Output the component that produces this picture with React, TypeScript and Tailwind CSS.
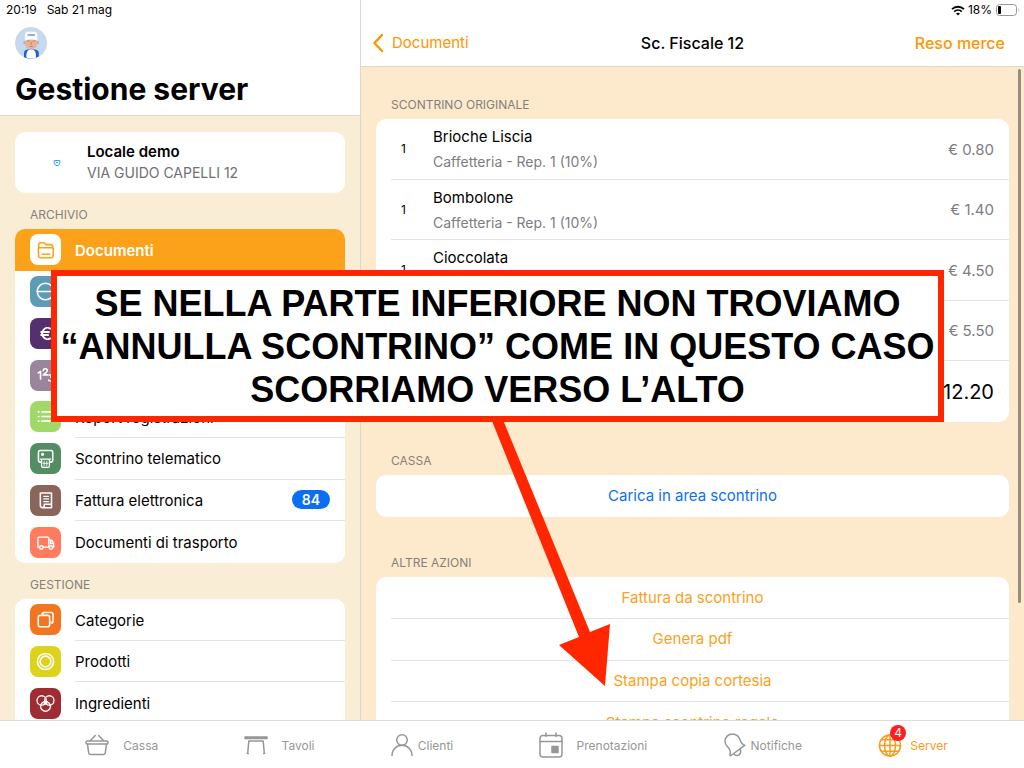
import React from 'react'

type ArchiveItem = {
  label: string
  color: string
  icon: React.ReactNode
  badge?: number
  active?: boolean
}

const stroke = {
  fill: 'none',
  stroke: 'currentColor',
  strokeWidth: 1.5,
  strokeLinecap: 'round' as const,
  strokeLinejoin: 'round' as const,
}

const FolderIcon = () => (
  <svg viewBox="0 0 30 30" className="w-full h-full" {...stroke}>
    <path d="M8.5 14v-4c0-.9.6-1.500 1.500-1.500h3.200c.5 0 .9.2 1.200.6l1 1.200h4.900c.9 0 1.500.6 1.500 1.500v2" />
    <path d="M9 13.300h12.500c.7 0 1.200.5 1.100 1.200l-.2 6.800c0 .9-.7 1.600-1.600 1.600H9.900c-.9 0-1.600-.7-1.600-1.600L8 14.500c0-.7.4-1.200 1-1.200z" />
    <path d="M11.800 19.500h7.200" />
  </svg>
)

const MinusIcon = () => (
  <svg viewBox="0 0 30 30" className="w-full h-full" {...stroke}>
    <circle cx="15" cy="15" r="8" />
    <path d="M7 15h16" />
  </svg>
)

const EuroIcon = () => (
  <svg viewBox="0 0 30 30" className="w-full h-full" {...stroke} strokeWidth={1.8}>
    <path d="M19.500 10.300a5 5.500 0 1 0 0 9.400M10.800 13.600h7.500M10.800 16.400h6.800" />
  </svg>
)

const NumbersIcon = () => (
  <svg viewBox="0 0 30 30" className="w-full h-full" {...stroke} strokeWidth={1.6}>
    <path d="M8 12.500l2.200-1.500v7.500M12.800 10.300c.2-2.600 4.200-2.400 3.900.1-.1 1.400-2 2.600-3.800 4h4.200M18.500 14.500h3.300l-1.800 2.100c2.800.2 2.400 3.900-.3 3.700-.8 0-1.400-.3-1.700-.8" />
  </svg>
)

const ListIcon = () => (
  <svg viewBox="0 0 30 30" className="w-full h-full" {...stroke} strokeWidth={1.6}>
    <path d="M11.500 10.500h11M11.500 15h11M11.500 19.500h11M8 10.500h.6M8 15h.6M8 19.500h.6" />
  </svg>
)

const PrinterIcon = () => (
  <svg viewBox="0 0 30 30" className="w-full h-full" {...stroke}>
    <path d="M11 18.500H9.800c-.9 0-1.600-.6-1.600-1.500V8.800c0-.9.7-1.600 1.600-1.600h10.600c.9 0 1.600.7 1.600 1.600V17c0 .9-.7 1.500-1.600 1.500H19" />
    <path d="M11.200 15.500h7.600v6.800c0 .8-.6 1.300-1.300 1.300h-5c-.7 0-1.300-.5-1.300-1.300zM10 15.500h10" strokeWidth={1.2} />
    <path d="M13.700 17.500v4.500M16.300 17.500v4.500M12.500 19.700h5" strokeWidth={0.8} />
    <circle cx="12.200" cy="11" r=".9" fill="currentColor" />
  </svg>
)

const InvoiceIcon = () => (
  <svg viewBox="0 0 30 30" className="w-full h-full" {...stroke}>
    <path d="M10 18V7.700h10.800v10.800M10 7.700v12c0 1.400.9 2.300 2.200 2.300h8.600v-3.300h-7v1.200c0 1.200-.7 2-1.700 2" />
    <path d="M13.300 11h4.600M13.300 13.500h4.600M13.300 16h4.600" strokeWidth={1.2} />
  </svg>
)

const TruckIcon = () => (
  <svg viewBox="0 0 30 30" className="w-full h-full" {...stroke} strokeWidth={1.4}>
    <path d="M9 19.500H7.700V11c0-.7.5-1.200 1.200-1.200h8.100c.7 0 1.200.5 1.200 1.200v8.500h-5.300" />
    <path d="M18.200 12.700h2.400c.5 0 .8.2 1 .6l1.300 2.900v3.300h-.7M20 13v3h2.700" />
    <circle cx="11" cy="19.800" r="1.700" />
    <circle cx="20.300" cy="19.800" r="1.700" />
  </svg>
)

const CategoriesIcon = () => (
  <svg viewBox="0 0 30 30" className="w-full h-full" {...stroke}>
    <rect x="8" y="11" width="11" height="11" rx="2" />
    <path d="M11.800 10c0-1 .7-1.700 1.600-1.700h7.100c1 0 1.800.8 1.800 1.800v6.800c0 .9-.6 1.500-1.500 1.600" />
    <path d="M13 8.500c0 1.600.5 2.500 1.500 2.500M22 17.500h-3" strokeWidth={0.8} />
  </svg>
)

const ProductsIcon = () => (
  <svg viewBox="0 0 30 30" className="w-full h-full" {...stroke}>
    <circle cx="15" cy="15" r="7.800" />
    <circle cx="15" cy="15" r="5.200" />
  </svg>
)

const IngredientsIcon = () => (
  <svg viewBox="0 0 30 30" className="w-full h-full" {...stroke} strokeWidth={1.3}>
    <circle cx="11.300" cy="12" r="4.500" />
    <circle cx="18.700" cy="12" r="4.500" />
    <circle cx="15" cy="17.800" r="4.700" />
    <circle cx="15" cy="14.200" r="1.400" />
  </svg>
)

const BasketIcon = () => (
  <svg viewBox="0 0 24 24" className="w-6 h-6" {...stroke}>
    <rect x="1" y="8" width="22" height="3" rx="1.200" />
    <path d="M2.500 11l1.200 8.800c.2 1.100.9 1.700 2 1.700h12.600c1.100 0 1.800-.6 2-1.700L21.500 11M5.500 7.500L10.300 2.500M18.500 7.500L13.700 2.500" />
  </svg>
)

const TableIcon = () => (
  <svg viewBox="0 0 24 24" className="w-6 h-6" {...stroke}>
    <rect x="1" y="4" width="22" height="1.500" />
    <path d="M3.700 20.500L4.800 8h14.400l1.100 12.500M3.200 20.500h1.100M19.700 20.500h1" />
  </svg>
)

const PersonIcon = () => (
  <svg viewBox="0 0 22 24" className="w-[22px] h-6" {...stroke}>
    <circle cx="11" cy="7" r="5.300" />
    <path d="M1 22.500c0-5.800 4.300-10.200 10-10.200s10 4.400 10 10.200" />
  </svg>
)

const CalendarIcon = () => (
  <svg viewBox="0 0 24 26" className="w-6 h-[26px]" {...stroke}>
    <rect x="1" y="3.500" width="22" height="21.500" rx="3" />
    <path d="M1 9.500h22M7 1v3.500M17 1v3.500" />
    <rect x="13" y="14.500" width="6" height="6" fill="currentColor" />
  </svg>
)

const BellIcon = () => (
  <svg viewBox="0 0 22 24" className="w-[22px] h-6" {...stroke}>
    <path d="M7 22.500L20.800 12.300c-2.300-.5-3.500-2-4.400-4.700C15 3.400 12 1 8.500 1 4.200 1 1 4.300 1 8.200c0 2.100.8 3.700 2.400 5.300 2.700 2.700 3.900 4.700 2.600 8.300-.2.700.4 1.100 1 .7z" />
    <path d="M10 20.800c1.300 2 4 2.200 5.500.6 1.400-1.500 1.500-3.400.6-5.300" />
  </svg>
)

const GlobeIcon = () => (
  <svg viewBox="0 0 24 24" className="w-6 h-6" {...stroke}>
    <circle cx="12" cy="12.500" r="10.500" />
    <ellipse cx="12" cy="12.500" rx="5.500" ry="10.500" />
    <path d="M12 2v21M1.500 12.500h21M3.500 6.800h17M3.500 18.200h17" />
  </svg>
)

const Avatar = () => (
  <svg viewBox="0 0 32 32" className="w-8 h-8">
    <circle cx="16" cy="16" r="15.500" fill="#c3daf5" stroke="#d4d4d4" />
    <path d="M9 30.200V26c0-2.200 1.500-3.500 4-3.500h6.500c2.500 0 4.300 1.300 4.300 3.500v3.600c-4.500 2.300-10 2.600-14.800.6z" fill="#1f62cf" />
    <path d="M11.500 30.800c-.5-5 .7-8.300 4.700-8.300s5.200 3.300 4.700 8.300c-3 .8-6.400.8-9.400 0z" fill="#fff" />
    <circle cx="9.800" cy="15.500" r="1.500" fill="#d99f88" />
    <circle cx="22.500" cy="15.500" r="1.500" fill="#d99f88" />
    <path d="M10 13h12.300v4c0 3-2.700 5.500-6.100 5.500S10 20 10 17z" fill="#e9b39b" />
    <path d="M9.800 13.500V8c0-2 1.500-3.500 3.500-3.500h5.700c2 0 3.500 1.500 3.500 3.500v5.500c-4-1.500-8.700-1.500-12.700 0z" fill="#fff" stroke="#d5d9de" strokeWidth=".5" />
    <path d="M12.500 8h7.500" stroke="#6397e8" strokeWidth="1.500" />
    <path d="M12 14h2.800M17.700 14h2.800M16.200 15v3M14.800 19.500h3" stroke="#9c7563" strokeWidth=".7" />
  </svg>
)

const archive: ArchiveItem[] = [
  { label: 'Documenti', color: 'bg-white text-[#fca11a]', icon: <FolderIcon />, active: true },
  { label: '', color: 'bg-[#5d9cb7] text-white', icon: <MinusIcon /> },
  { label: '', color: 'bg-[#54306f] text-white', icon: <EuroIcon /> },
  { label: '', color: 'bg-[#9b859d] text-white', icon: <NumbersIcon /> },
  { label: 'Report registrazioni', color: 'bg-[#a0d967] text-white', icon: <ListIcon /> },
  { label: 'Scontrino telematico', color: 'bg-[#528e62] text-white', icon: <PrinterIcon /> },
  { label: 'Fattura elettronica', color: 'bg-[#89655a] text-white', icon: <InvoiceIcon />, badge: 84 },
  { label: 'Documenti di trasporto', color: 'bg-[#ff7d5e] text-white', icon: <TruckIcon /> },
]

const management: ArchiveItem[] = [
  { label: 'Categorie', color: 'bg-[#f37421] text-white', icon: <CategoriesIcon /> },
  { label: 'Prodotti', color: 'bg-[#ded31c] text-white', icon: <ProductsIcon /> },
  { label: 'Ingredienti', color: 'bg-[#9f2b33] text-white', icon: <IngredientsIcon /> },
]

const products = [
  { quantity: 1, name: 'Brioche Liscia', detail: 'Caffetteria - Rep. 1 (10%)', price: '€ 0.80' },
  { quantity: 1, name: 'Bombolone', detail: 'Caffetteria - Rep. 1 (10%)', price: '€ 1.40' },
  { quantity: 1, name: 'Cioccolata', price: '€ 4.50' },
  { price: '€ 5.50' },
]

const actions = ['Fattura da scontrino', 'Genera pdf', 'Stampa copia cortesia', 'Stampa scontrino regalo']

const tabs = [
  { label: 'Cassa', icon: <BasketIcon />, wide: true },
  { label: 'Tavoli', icon: <TableIcon />, wide: true },
  { label: 'Clienti', icon: <PersonIcon /> },
  { label: 'Prenotazioni', icon: <CalendarIcon />, wide: true },
  { label: 'Notifiche', icon: <BellIcon /> },
  { label: 'Server', icon: <GlobeIcon />, badge: 4 },
]

const SectionTitle = ({ children }: { children: React.ReactNode }) => (
  <h2 className="px-[15px] pb-1.5 text-xs leading-4 text-[#85807a]">{children}</h2>
)

const MenuItem = ({ item }: { item: ArchiveItem }) => (
  <li className={`group ${item.active ? 'bg-[#fca11a]' : 'bg-white'}`}>
    <button className="w-full h-full flex items-center gap-[14px] pl-[15px] text-left">
      <span className={`w-[31px] h-[31px] shrink-0 rounded-lg overflow-hidden ${item.color}`}>{item.icon}</span>
      <span
        className={`flex-1 self-stretch flex items-center justify-between pr-[15px] text-[15px] border-b group-last:border-transparent ${
          item.active ? 'font-semibold text-white border-transparent' : 'border-[#e3e3e5]'
        }`}
      >
        <span className="pt-[3px]">{item.label}</span>
        {item.badge && (
          <span className="w-[38px] h-[19px] flex items-center justify-center rounded-full bg-[#0a6ff5] text-sm font-semibold text-white">
            {item.badge}
          </span>
        )}
      </span>
    </button>
  </li>
)

const Sidebar = () => (
  <aside className="w-[361px] shrink-0 flex flex-col border-r border-[#dcd8d0] bg-[#faedd6]">
    <header className="h-[116px] shrink-0 bg-white border-b border-[#dedad3]">
      <div className="flex gap-2.5 pl-1.5 pt-0.5 text-xs leading-4">
        <span>20:19</span>
        <span>Sab 21 mag</span>
      </div>
      <div className="px-[15px] pt-[9px]">
        <Avatar />
        <h1 className="pt-3 text-3xl font-bold">Gestione server</h1>
      </div>
    </header>
    <div className="flex-1 min-h-0 overflow-hidden px-[15px] pt-4">
      <button className="w-full h-[61px] flex items-center rounded-[10px] bg-white text-left">
        <span className="w-[72px] pl-[38px] shrink-0">
          <svg viewBox="0 0 8 8" className="w-2 h-2">
            <path d="M1.200 1.500h5.600v2.200c0 3.800-5.600 3.800-5.600 0zM3 3.500h2" fill="#eaf7fd" stroke="#3aa4d4" />
          </svg>
        </span>
        <span className="flex flex-col">
          <span className="text-[15px] leading-[21px] font-semibold">Locale demo</span>
          <span className="text-sm leading-[22px] text-[#707074]">VIA GUIDO CAPELLI 12</span>
        </span>
      </button>
      <div className="pt-[14px]">
        <SectionTitle>ARCHIVIO</SectionTitle>
        <ul className="h-[334px] grid auto-rows-fr rounded-[10px] overflow-hidden">
          {archive.map((item, i) => (
            <MenuItem key={i} item={item} />
          ))}
        </ul>
      </div>
      <div className="pt-[14px]">
        <SectionTitle>GESTIONE</SectionTitle>
        <ul className="h-[125px] grid auto-rows-fr rounded-t-[10px] overflow-hidden">
          {management.map((item) => (
            <MenuItem key={item.label} item={item} />
          ))}
        </ul>
      </div>
    </div>
  </aside>
)

const Receipt = () => (
  <main className="flex-1 min-w-0 flex flex-col bg-[#fdeacd]">
    <header className="h-[67px] shrink-0 bg-white border-b border-[#dfd8cd]">
      <div className="flex items-center justify-end gap-[3px] pr-1 pt-0.5 text-xs leading-4">
        <svg viewBox="0 0 14 11" className="w-[14px] h-[11px]" fill="none" stroke="#000" strokeWidth="1.800">
          <path d="M1 4.200c3.500-3.300 8.500-3.300 12 0M3.200 6.600c2.200-2 5.400-2 7.600 0" />
          <path d="M7 10.500L5 8.500c1.200-1 2.800-1 4 0z" fill="#000" stroke="none" />
        </svg>
        <span>18%</span>
        <svg viewBox="0 0 25 12" className="w-[25px] h-3">
          <rect x="1.500" y=".5" width="20" height="11" rx="3" fill="#fff" stroke="#999" />
          <rect x="3" y="2" width="3" height="8" rx="1" fill="#000" />
          <path d="M23.500 4.300c1 .5 1 2.900 0 3.400z" fill="#999" />
        </svg>
      </div>
      <div className="h-[48px] grid grid-cols-3 items-center px-[11px] pt-0.5">
        <button className="flex items-center gap-2 text-[15px] text-[#ff9500]">
          <svg viewBox="0 0 12 20" className="w-3 h-5" fill="none" stroke="currentColor" strokeWidth="2.500" strokeLinecap="round" strokeLinejoin="round">
            <path d="M10 2L2.500 10l7.500 8" />
          </svg>
          Documenti
        </button>
        <h1 className="text-center text-base font-medium">Sc. Fiscale 12</h1>
        <button className="pr-2 text-right text-base font-medium text-[#ff9500]">Reso merce</button>
      </div>
    </header>

    <div className="relative flex-1 min-h-0 overflow-hidden px-[15px] pt-[30px]">
      <section>
        <SectionTitle>SCONTRINO ORIGINALE</SectionTitle>
        <ul className="h-[303px] grid auto-rows-fr rounded-[10px] bg-white pl-[15px]">
          {products.map((product, i) => (
            <li key={i} className="flex items-center pr-[15px] pt-px border-b border-[#e3e3e5]">
              <span className="w-[42px] pl-2.5 text-xs">{product.quantity}</span>
              <div className="flex-1">
                <p className="text-[15px] leading-[25px]">{product.name}</p>
                <p className="h-[25px] text-sm leading-[25px] text-[#7d7d82]">{product.detail}</p>
              </div>
              <span className="pt-px text-[15px] text-[#7d7d82]">{product.price}</span>
            </li>
          ))}
          <li className="flex items-center justify-end pr-[15px] pt-px text-xl">12.20</li>
        </ul>
      </section>

      <section className="pt-[31px]">
        <SectionTitle>CASSA</SectionTitle>
        <button className="w-full h-[42px] rounded-[10px] bg-white text-[15px] text-[#0a6ff5]">Carica in area scontrino</button>
      </section>

      <section className="pt-[38px]">
        <SectionTitle>ALTRE AZIONI</SectionTitle>
        <ul className="h-[167px] grid auto-rows-fr rounded-[10px] bg-white pl-[15px]">
          {actions.map((action) => (
            <li key={action} className="border-b border-[#e3e3e5]">
              <button className="w-full h-full pr-[15px] pt-px text-[15px] text-[#fb9f1c]">{action}</button>
            </li>
          ))}
        </ul>
      </section>

      <div className="absolute right-[3px] top-0.5 w-[3px] h-[534px] rounded-full bg-[#978c7d]" />
    </div>
  </main>
)

const TabBar = () => (
  <nav className="h-12 shrink-0 flex items-center justify-evenly border-t border-[#dcdcdc] bg-white text-xs text-[#979797]">
    {tabs.map((tab) => (
      <button key={tab.label} className={`flex items-center ${tab.badge ? 'gap-2 text-[#f99a1c]' : 'gap-[5px]'}`}>
        <span className={`relative ${tab.wide ? 'px-[9px]' : ''}`}>
          {tab.icon}
          {tab.badge && (
            <span className="absolute -top-2 left-3 w-4 h-4 flex items-center justify-center rounded-full bg-[#fb1f1f] text-xs text-white">
              {tab.badge}
            </span>
          )}
        </span>
        <span className="pt-0.5">{tab.label}</span>
      </button>
    ))}
  </nav>
)

const Callout = () => (
  <div className="absolute left-[51px] top-[270px] w-[893px]">
    <p className="h-[152px] border-[6px] border-[#ff2600] bg-white pt-1.5 text-center text-4xl leading-[43px] font-bold whitespace-nowrap font-['Liberation_Sans',Arial,sans-serif]">
      SE NELLA PARTE INFERIORE NON TROVIAMO
      <br />
      “ANNULLA SCONTRINO” COME IN QUESTO CASO
      <br />
      SCORRIAMO VERSO L’ALTO
    </p>
    <svg viewBox="0 0 120 266" className="absolute left-[440px] top-[151px] w-[120px] h-[266px]" fill="#ff2600">
      <path d="M1 0h11.500l86.500 211 20-8-5 62-46-41 20-8z" />
    </svg>
  </div>
)

const App = () => {
  return (
    <div className="relative h-screen flex flex-col overflow-hidden bg-white text-black font-[Inter,sans-serif]">
      <div className="flex-1 min-h-0 flex">
        <Sidebar />
        <Receipt />
      </div>
      <TabBar />
      <Callout />
    </div>
  )
}

export default App
